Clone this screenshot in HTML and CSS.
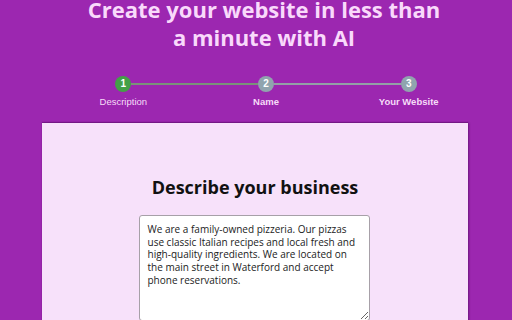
FILE: index.html
```html
<!DOCTYPE html>
<html>
<head>
<meta charset="utf-8">
<link rel="stylesheet" href="styles.css">
</head>
<body>
<div class="page">
  <h1 class="title">Create your website in less than<br>a minute with AI</h1>
  <div class="stepper">
    <div class="step done">
      <div class="dot">1</div>
      <div class="label">Description</div>
    </div>
    <div class="step">
      <div class="dot">2</div>
      <div class="label">Name</div>
    </div>
    <div class="step">
      <div class="dot">3</div>
      <div class="label">Your Website</div>
    </div>
  </div>
  <div class="card">
    <h2 class="heading">Describe your business</h2>
    <textarea class="desc">We are a family-owned pizzeria. Our pizzas use classic Italian recipes and local fresh and high-quality ingredients. We are located on the main street in Waterford and accept phone reservations.</textarea>
  </div>
</div>
</body>
</html>
```
FILE: styles.css
```css
html, body {
  margin: 0;
  padding: 0;
  background: #9c27b0;
  overflow: hidden;
}
.page {
  display: flex;
  flex-direction: column;
  align-items: flex-start;
}
.title {
  margin: -5px 0 0 0;
  width: 528px;
  text-align: center;
  font-family: "Open Sans", sans-serif;
  font-weight: 700;
  font-size: 22px;
  line-height: 28px;
  color: #f9d9fb;
}
.stepper {
  margin: 25px 0 0 52px;
  width: 428px;
  display: grid;
  grid-template-columns: repeat(3, 1fr);
}
.step {
  position: relative;
  display: flex;
  flex-direction: column;
  align-items: center;
}
.step + .step::before {
  content: "";
  position: absolute;
  top: 7px;
  right: calc(50% + 8px);
  width: calc(100% - 16px);
  height: 2px;
  background: #93a0a6;
}
.step:nth-child(2)::before {
  background: #7a9279;
}
.dot {
  width: 16px;
  height: 16px;
  border-radius: 50%;
  background: #90a4ae;
  color: #fff;
  font-family: "Liberation Sans", Arial, sans-serif;
  font-weight: 700;
  font-size: 10px;
  line-height: 16px;
  text-align: center;
}
.done .dot {
  background: #43a047;
}
.label {
  margin-top: 4px;
  font-family: "Liberation Sans", Arial, sans-serif;
  font-weight: 700;
  font-size: 9.5px;
  line-height: 12px;
  color: #f6dcf8;
}
.done .label {
  font-weight: 400;
}
.card {
  margin: 15px 0 0 42px;
  width: 426px;
  height: 260px;
  background: #f7e1fa;
  box-shadow: 1px 0 2px rgba(60, 0, 70, 0.45), 0 -1px 1px rgba(60, 0, 70, 0.3);
  display: flex;
  flex-direction: column;
  align-items: center;
}
.heading {
  margin: 52px 0 0 0;
  font-family: "Open Sans", sans-serif;
  font-weight: 700;
  font-size: 18px;
  line-height: 24px;
  color: #111;
}
.desc {
  margin: 16px 0 0 -2px;
  box-sizing: border-box;
  width: 231px;
  height: 106px;
  padding: 7px 8px;
  border: 1px solid #a7a0a8;
  border-radius: 3px;
  background: #fff;
  font-family: "Open Sans", sans-serif;
  font-size: 10px;
  line-height: 12.7px;
  color: #222;
  resize: vertical;
  overflow: hidden;
}
```
